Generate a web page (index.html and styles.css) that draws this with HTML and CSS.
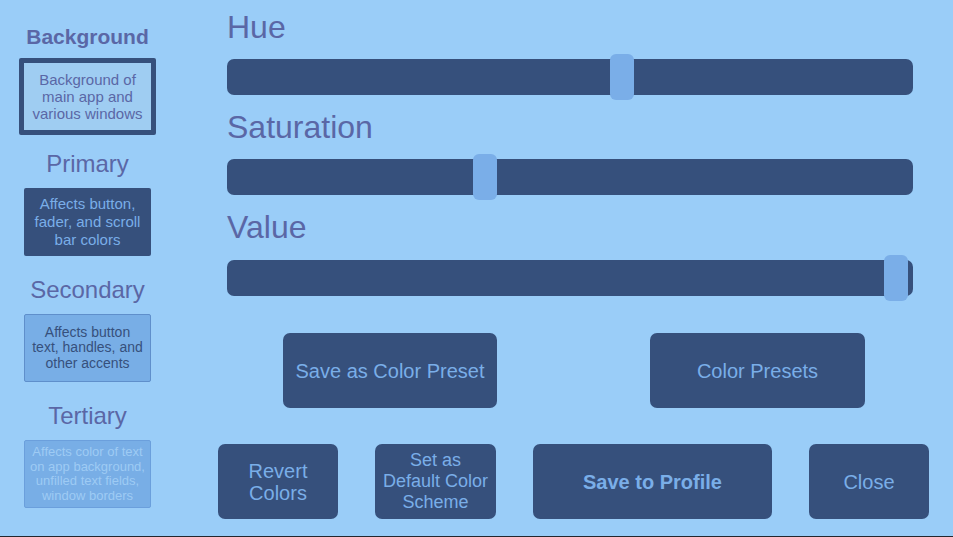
FILE: index.html
```html
<!DOCTYPE html>
<html lang="en">
<head>
<meta charset="utf-8">
<title>Color Scheme</title>
<link rel="stylesheet" href="styles.css">
</head>
<body>
<div class="app">
  <aside class="sidebar">
    <div class="group group-bg">
      <div class="group-label bold">Background</div>
      <div class="swatch swatch-bg">Background of main app and various windows</div>
    </div>
    <div class="group">
      <div class="group-label">Primary</div>
      <div class="swatch swatch-primary">Affects button, fader, and scroll bar colors</div>
    </div>
    <div class="group">
      <div class="group-label">Secondary</div>
      <div class="swatch swatch-secondary">Affects button<br>text, handles, and<br>other accents</div>
    </div>
    <div class="group">
      <div class="group-label">Tertiary</div>
      <div class="swatch swatch-tertiary">Affects color of text on app background, unfilled text fields, window borders</div>
    </div>
  </aside>
  <main class="main">
    <div class="sliders">
      <div class="slider">
        <div class="slider-label">Hue</div>
        <div class="track"><div class="handle" style="left: 383px"></div></div>
      </div>
      <div class="slider">
        <div class="slider-label">Saturation</div>
        <div class="track"><div class="handle" style="left: 246px"></div></div>
      </div>
      <div class="slider">
        <div class="slider-label">Value</div>
        <div class="track"><div class="handle" style="left: 657px"></div></div>
      </div>
    </div>
    <div class="row row-presets">
      <button class="btn btn-preset">Save as Color Preset</button>
      <button class="btn btn-preset">Color Presets</button>
    </div>
    <div class="row row-actions">
      <button class="btn btn-small">Revert<br>Colors</button>
      <button class="btn btn-small btn-default">Set as<br>Default Color<br>Scheme</button>
      <button class="btn btn-wide bold">Save to Profile</button>
      <button class="btn btn-small">Close</button>
    </div>
  </main>
</div>
</body>
</html>
```

FILE: styles.css
```css
* { box-sizing: border-box; }

html, body {
  margin: 0;
  padding: 0;
}

body {
  width: 953px;
  height: 537px;
  background: #9acdf8;
  font-family: "Liberation Sans", Arial, sans-serif;
  color: #5a67a6;
  overflow: hidden;
}

.app {
  display: flex;
  height: 537px;
  border-bottom: 1px solid #23272f;
}

.bold { font-weight: bold; }

/* Sidebar */
.sidebar {
  width: 175px;
  flex: none;
  display: flex;
  flex-direction: column;
  align-items: center;
  padding-top: 23px;
}

.group {
  display: flex;
  flex-direction: column;
  align-items: center;
  margin-bottom: 20px;
}

.group-bg { margin-bottom: 15px; }

.group-label {
  font-size: 24px;
  line-height: 28px;
  height: 28px;
  margin-bottom: 10px;
  white-space: nowrap;
}

.group-label.bold {
  font-size: 21px;
  margin-bottom: 7px;
}

.swatch {
  width: 127px;
  height: 68px;
  display: flex;
  align-items: center;
  justify-content: center;
  text-align: center;
  border-radius: 2px;
}

.swatch-bg {
  width: 137px;
  height: 77px;
  border: 5px solid #36507c;
  background: #9fcdf2;
  color: #5a67a6;
  font-size: 15px;
  line-height: 17px;
  padding: 0 4px;
}

.swatch-primary {
  background: #36507c;
  color: #7aaee8;
  font-size: 15px;
  line-height: 18px;
  padding: 0 3px;
}

.swatch-secondary {
  background: #78aee6;
  border: 1px solid #5f8fcb;
  color: #36507c;
  font-size: 14px;
  line-height: 15.5px;
  padding: 0 1px;
  white-space: nowrap;
}

.swatch-tertiary {
  background: #78aee6;
  border: 1px solid #6b9fdc;
  color: #9ecbf4;
  font-size: 13px;
  line-height: 14.5px;
  padding: 0 4px;
}

/* Main */
.main {
  flex: none;
  width: 735px;
  margin-left: 43px;
  padding-top: 9px;
  display: flex;
  flex-direction: column;
}

.sliders {
  margin-left: 9px;
  width: 686px;
}

.slider { margin-bottom: 14px; }

.slider-label {
  font-size: 32px;
  line-height: 37px;
  height: 37px;
  margin-bottom: 13px;
}

.slider + .slider + .slider .slider-label { margin-bottom: 14px; }

.track {
  position: relative;
  height: 36px;
  background: #36507c;
  border-radius: 7px;
}

.handle {
  position: absolute;
  top: -5px;
  width: 24px;
  height: 46px;
  background: #7aaee8;
  border-radius: 6px;
}

.row {
  display: flex;
}

.row-presets {
  margin-top: 23px;
  padding-left: 65px;
  gap: 153px;
}

.row-actions {
  margin-top: 36px;
  gap: 37px;
}

.btn {
  height: 75px;
  border: none;
  border-radius: 7px;
  background: #36507c;
  color: #7aaee8;
  font-family: "Liberation Sans", Arial, sans-serif;
  font-size: 20px;
  line-height: 22px;
  padding: 0;
  display: flex;
  align-items: center;
  justify-content: center;
  text-align: center;
}

.btn-preset { width: 214px; }
.btn-preset + .btn-preset { width: 215px; }

.btn-small { width: 120px; }

.btn-default {
  width: 121px;
  font-size: 18px;
  line-height: 21px;
}

.btn-wide { width: 239px; font-weight: bold; }
```
